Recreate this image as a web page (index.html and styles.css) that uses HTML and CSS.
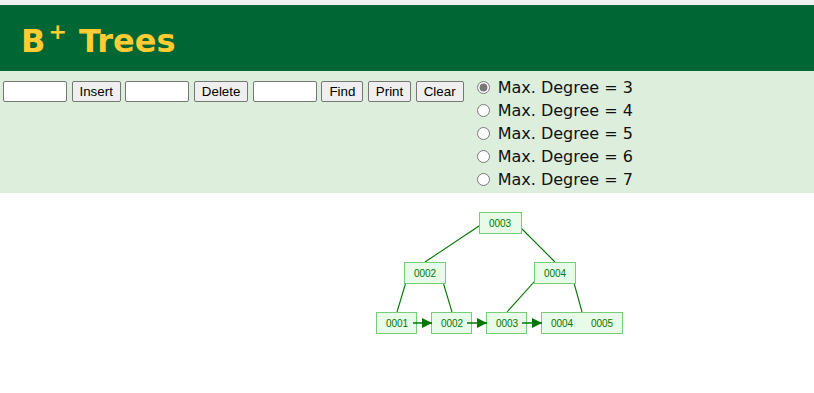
FILE: index.html
```html
<!DOCTYPE html>
<html>
<head>
<meta charset="utf-8">
<title>B+ Trees</title>
<link rel="stylesheet" href="styles.css">
</head>
<body>
<div class="header">
	<h1>B<sup>+</sup> Trees</h1>
</div>
<div class="controls">
	<div class="ops">
		<input type="text" class="field"> <button>Insert</button>
		<input type="text" class="field"> <button>Delete</button>
		<input type="text" class="field"> <button>Find</button>
		<button>Print</button>
		<button>Clear</button>
	</div>
	<div class="degrees">
		<label><input type="radio" name="degree" checked> Max. Degree = 3</label>
		<label><input type="radio" name="degree"> Max. Degree = 4</label>
		<label><input type="radio" name="degree"> Max. Degree = 5</label>
		<label><input type="radio" name="degree"> Max. Degree = 6</label>
		<label><input type="radio" name="degree"> Max. Degree = 7</label>
	</div>
</div>
<div class="canvas">
	<svg width="814" height="200" viewBox="0 194 814 200">
		<defs>
			<marker id="arrow" viewBox="0 0 10 10" refX="10" refY="5" markerWidth="10" markerHeight="10" markerUnits="userSpaceOnUse" orient="auto">
				<path d="M0,0 L10,5 L0,10 z" fill="#007700"/>
			</marker>
		</defs>
		<!-- edges -->
		<g class="edge">
			<line x1="482" y1="225" x2="425" y2="263"/>
			<line x1="517" y1="225" x2="555" y2="263"/>
			<line x1="409" y1="273" x2="397" y2="313"/>
			<line x1="440" y1="273" x2="452" y2="313"/>
			<line x1="543" y1="273" x2="507" y2="313"/>
			<line x1="571" y1="273" x2="582" y2="313"/>
		</g>
		<!-- nodes -->
		<g class="node">
			<rect x="479.5" y="213.5" width="42" height="21"/>
			<rect x="404.5" y="263.5" width="41" height="21"/>
			<rect x="534.5" y="263.5" width="41" height="21"/>
			<rect x="376.5" y="313.5" width="40" height="21"/>
			<rect x="431.5" y="313.5" width="40" height="21"/>
			<rect x="486.5" y="313.5" width="40" height="21"/>
			<rect x="541.5" y="313.5" width="81" height="21"/>
		</g>
		<g class="link">
			<line x1="413" y1="324" x2="432" y2="324"/>
			<line x1="467" y1="324" x2="487" y2="324"/>
			<line x1="522" y1="324" x2="542" y2="324"/>
		</g>
		<g class="key">
			<text x="500" y="228">0003</text>
			<text x="425" y="278">0002</text>
			<text x="555" y="278">0004</text>
			<text x="397" y="328">0001</text>
			<text x="452" y="328">0002</text>
			<text x="507" y="328">0003</text>
			<text x="562" y="328">0004</text>
			<text x="602" y="328">0005</text>
		</g>
	</svg>
</div>
</body>
</html>
```

FILE: styles.css
```css
body{
	margin:0;
	font-family:"DejaVu Sans",Verdana,sans-serif;
	font-size:16px;
	background-color:white;
}
.header{
	border-top:5px solid #f0f0f0;
	background-color:#006633;
	height:71px;
	padding-left:21px;
	box-sizing:border-box;
}
.header h1{
	margin:0;
	padding-top:18px;
	font-size:32px;
	font-weight:bold;
	line-height:36px;
	color:#ffcc33;
}
.header sup{
	font-size:22px;
	line-height:0;
	vertical-align:13px;
	margin-left:3px;
	margin-right:1px;
}
.controls{
	display:flex;
	align-items:flex-start;
	background-color:#ddeedd;
	height:122px;
	padding:5px 0 0 3px;
	box-sizing:border-box;
}
.ops{
	margin-top:5px;
	display:flex;
	gap:4.5px;
}
.ops .field{
	width:64px;
	height:21px;
	box-sizing:border-box;
	margin:0;
	border:1px solid #767676;
	border-radius:2px;
	background:white;
}
.ops button{
	height:21px;
	margin:0;
	padding:0 7px;
	font-family:"Liberation Sans",Arial,sans-serif;
	font-size:13.33px;
	color:black;
	background-color:#efefef;
	border:1px solid #767676;
	border-radius:2px;
}
.degrees{
	margin-left:8px;
	display:flex;
	flex-direction:column;
}
.degrees label{
	display:block;
	height:23px;
	line-height:23px;
	color:#111;
}
.degrees input{
	margin:0 3px 0 5px;
	width:13px;
	height:13px;
	vertical-align:-1px;
	accent-color:#777;
}
.canvas svg{
	display:block;
}
.edge line{
	stroke:#007700;
	stroke-width:1.1;
}
.link line{
	stroke:#007700;
	stroke-width:1.5;
	marker-end:url(#arrow);
}
.node rect{
	fill:#e8fbe8;
	stroke:#77cc77;
	stroke-width:1;
}
.key text{
	font-family:"Liberation Sans",Arial,sans-serif;
	font-size:10px;
	fill:#007700;
	text-anchor:middle;
}
```
